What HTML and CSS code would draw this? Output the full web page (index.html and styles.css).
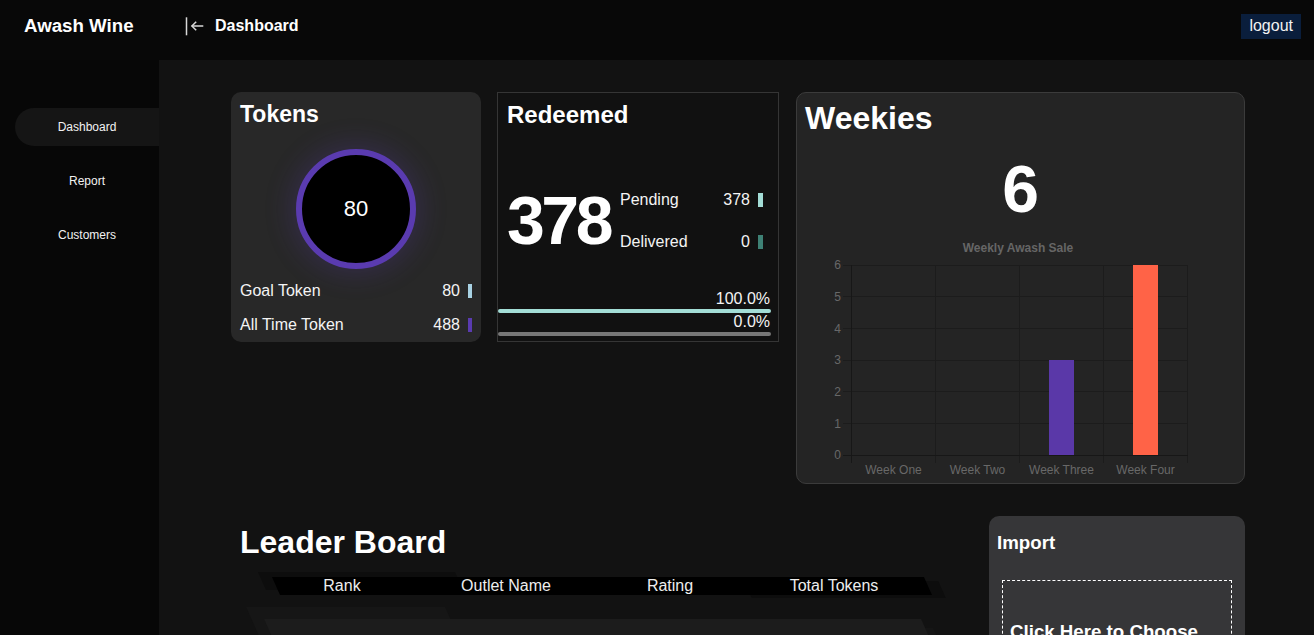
FILE: index.html
```html
<!DOCTYPE html>
<html lang="en">
<head>
<meta charset="utf-8">
<title>Awash Wine - Dashboard</title>
<link rel="stylesheet" href="styles.css">
</head>
<body>
<header class="topbar">
  <div class="brand">Awash Wine</div>
  <div class="crumb">
    <svg class="crumb-icon" width="22" height="22" viewBox="0 0 22 22" aria-hidden="true">
      <line x1="1.5" y1="2.3" x2="1.5" y2="20.3"/>
      <line x1="6.7" y1="11" x2="18.3" y2="11"/>
      <polyline points="11.2,6.8 6.9,11 11.2,15.2"/>
    </svg>
    <span>Dashboard</span>
  </div>
  <button class="logout">logout</button>
</header>
<div class="layout">
  <nav class="sidebar">
    <a class="nav-item active">Dashboard</a>
    <a class="nav-item">Report</a>
    <a class="nav-item">Customers</a>
  </nav>
  <main class="main">
    <section class="cards">
      <div class="card-tokens">
        <h2 class="tokens-title">Tokens</h2>
        <div class="ring">80</div>
        <div class="stat-row goal">
          <span class="stat-label">Goal Token</span>
          <span class="stat-value">80</span>
          <span class="stat-bar bar-blue"></span>
        </div>
        <div class="stat-row alltime">
          <span class="stat-label">All Time Token</span>
          <span class="stat-value">488</span>
          <span class="stat-bar bar-purple"></span>
        </div>
      </div>

      <div class="card-redeemed">
        <h2 class="redeemed-title">Redeemed</h2>
        <div class="redeemed-body">
          <div class="big">378</div>
          <div class="stats">
            <div class="stat-row">
              <span class="stat-label">Pending</span>
              <span class="stat-value">378</span>
              <span class="stat-bar wide bar-teal"></span>
            </div>
            <div class="stat-row">
              <span class="stat-label">Delivered</span>
              <span class="stat-value">0</span>
              <span class="stat-bar wide bar-darkteal"></span>
            </div>
          </div>
        </div>
        <div class="progress">
          <div class="pct">100.0%</div>
          <div class="pbar pbar-teal"></div>
          <div class="pct">0.0%</div>
          <div class="pbar pbar-grey"></div>
        </div>
      </div>

      <div class="card-weekies">
        <h2 class="weekies-title">Weekies</h2>
        <div class="weekies-num">6</div>
        <svg class="chart" width="447" height="240" viewBox="0 0 447 240">
          <text class="chart-title" x="221" y="15" text-anchor="middle">Weekly Awash Sale</text>
          <g class="grid">
            <line x1="46" y1="28" x2="390.5" y2="28"/>
            <line x1="46" y1="59.7" x2="390.5" y2="59.7"/>
            <line x1="46" y1="91.3" x2="390.5" y2="91.3"/>
            <line x1="46" y1="123" x2="390.5" y2="123"/>
            <line x1="46" y1="154.7" x2="390.5" y2="154.7"/>
            <line x1="46" y1="186.3" x2="390.5" y2="186.3"/>
            <line x1="138.5" y1="28" x2="138.5" y2="226"/>
            <line x1="222.5" y1="28" x2="222.5" y2="226"/>
            <line x1="306.5" y1="28" x2="306.5" y2="226"/>
            <line x1="390.5" y1="28" x2="390.5" y2="226"/>
          </g>
          <g class="axis">
            <line x1="46" y1="218" x2="390.5" y2="218"/>
            <line x1="54.5" y1="28" x2="54.5" y2="226"/>
          </g>
          <rect x="252" y="123" width="25" height="95" fill="#5a38a8"/>
          <rect x="336" y="28" width="25" height="190" fill="#ff6347"/>
          <g class="ylabels">
            <text x="44" y="32.3">6</text>
            <text x="44" y="64">5</text>
            <text x="44" y="95.6">4</text>
            <text x="44" y="127.3">3</text>
            <text x="44" y="159">2</text>
            <text x="44" y="190.6">1</text>
            <text x="44" y="222.3">0</text>
          </g>
          <g class="xlabels">
            <text x="96.5" y="237.3">Week One</text>
            <text x="180.5" y="237.3">Week Two</text>
            <text x="264.5" y="237.3">Week Three</text>
            <text x="348.5" y="237.3">Week Four</text>
          </g>
        </svg>
      </div>
    </section>

    <section class="lower">
      <div class="leader">
        <h2 class="leader-title">Leader Board</h2>
        <div class="lb-wrap lb-headwrap">
          <div class="lb-head">
            <span>Rank</span>
            <span>Outlet Name</span>
            <span>Rating</span>
            <span>Total Tokens</span>
          </div>
        </div>
        <div class="lb-wrap lb-rowwrap">
          <div class="lb-row"></div>
        </div>
      </div>
      <div class="import">
        <h3 class="import-title">Import</h3>
        <div class="dropzone">Click Here to Choose File</div>
      </div>
    </section>
  </main>
</div>
</body>
</html>
```

FILE: styles.css
```css
* {
  box-sizing: border-box;
}

html,
body {
  margin: 0;
  height: 100%;
}

body {
  background: #080808;
  color: #ffffff;
  font-family: "Liberation Sans", Arial, sans-serif;
  overflow: hidden;
}

/* ---------- top bar ---------- */
.topbar {
  height: 60px;
  display: flex;
  align-items: center;
  padding-bottom: 8px;
  background: #080808;
}

.brand {
  width: 185px;
  flex: none;
  padding-left: 24px;
  font-size: 18.7px;
  font-weight: 700;
  line-height: 22px;
}

.crumb {
  display: flex;
  align-items: center;
  gap: 8px;
  font-size: 16px;
  font-weight: 700;
  line-height: 20px;
}

.crumb-icon {
  display: block;
  fill: none;
  stroke: #d8d8d8;
  stroke-width: 1.5;
}

.logout {
  margin-left: auto;
  margin-right: 13px;
  height: 25px;
  padding: 0 8px;
  border: 0;
  background: #0a1e3c;
  color: #f2f2f2;
  font: 16px "Liberation Sans", Arial, sans-serif;
}

/* ---------- layout ---------- */
.layout {
  display: flex;
  height: calc(100% - 60px);
}

.sidebar {
  width: 159px;
  flex: none;
  background: #070707;
  padding-top: 48px;
  display: flex;
  flex-direction: column;
  gap: 16px;
}

.nav-item {
  margin-left: 15px;
  height: 38px;
  line-height: 38px;
  text-align: center;
  font-size: 12px;
  color: #f2f2f2;
  border-radius: 19px 0 0 19px;
}

.nav-item.active {
  background: #151515;
}

.main {
  flex: 1;
  background: #121212;
  padding: 32px 69px 0 72px;
}

/* ---------- cards row ---------- */
.cards {
  display: flex;
  align-items: flex-start;
}

h2,
h3 {
  margin: 0;
  font-weight: 700;
}

.stat-row {
  display: flex;
  align-items: center;
  font-size: 16px;
  line-height: 20px;
  color: #f4f4f4;
}

.stat-label {
  flex: 1;
}

.stat-bar {
  width: 4px;
  height: 14px;
  margin-left: 8px;
}

.stat-bar.wide {
  width: 5px;
}

.bar-blue { background: #a8d2e4; }
.bar-purple { background: #5a3bb0; }
.bar-teal { background: #a3ddd6; }
.bar-darkteal { background: #3e8175; }

/* tokens */
.card-tokens {
  width: 250px;
  height: 250px;
  flex: none;
  background: #282828;
  border-radius: 10px;
  padding: 9px 9px 0;
}

.tokens-title {
  font-size: 23px;
  line-height: 26px;
}

.ring {
  width: 120px;
  height: 120px;
  margin: 22px auto 0;
  border-radius: 50%;
  border: 6px solid #5a3bb0;
  background: #000000;
  display: flex;
  align-items: center;
  justify-content: center;
  font-size: 22px;
  box-shadow: 0 0 26px 6px rgba(90, 59, 176, 0.22);
}

.goal {
  margin-top: 12px;
}

.alltime {
  margin-top: 14px;
}

/* redeemed */
.card-redeemed {
  width: 282px;
  height: 250px;
  flex: none;
  margin-left: 16px;
  background: #111111;
  border: 1px solid #353535;
  display: flex;
  flex-direction: column;
}

.redeemed-title {
  font-size: 24px;
  line-height: 28px;
  margin: 8px 0 0 9px;
}

.redeemed-body {
  display: flex;
  align-items: flex-start;
  margin-top: 56px;
  padding-left: 9px;
}

.big {
  width: 113px;
  flex: none;
  font-size: 68px;
  line-height: 70px;
  font-weight: 700;
  letter-spacing: -3.5px;
}

.stats {
  width: 143px;
  margin-top: 5px;
  display: flex;
  flex-direction: column;
  gap: 22px;
}

.progress {
  margin-top: auto;
  padding: 0 7px 5px 0;
}

.pct {
  text-align: right;
  font-size: 16px;
  line-height: 18px;
  padding-right: 1px;
  color: #f4f4f4;
}

.pbar {
  height: 4px;
  margin-top: 1px;
  border-radius: 2px;
}

.pbar-teal { background: #a3ddd6; }
.pbar-grey { background: #777777; }

/* weekies */
.card-weekies {
  width: 449px;
  height: 392px;
  flex: none;
  margin-left: 17px;
  background: #242424;
  border: 1px solid #3b3b3b;
  border-radius: 10px;
}

.weekies-title {
  font-size: 32px;
  line-height: 37px;
  margin: 7px 0 0 8px;
}

.weekies-num {
  margin-top: 17px;
  font-size: 66px;
  line-height: 70px;
  font-weight: 700;
  text-align: center;
}

.chart {
  display: block;
  margin-top: 13px;
  font-family: "Liberation Sans", Arial, sans-serif;
}

.chart-title {
  font-size: 12px;
  font-weight: 700;
  fill: #666666;
}

.grid line {
  stroke: #1c1c1c;
  stroke-width: 1;
  shape-rendering: crispEdges;
}

.axis line {
  stroke: #171717;
  stroke-width: 1;
  shape-rendering: crispEdges;
}

.ylabels text {
  font-size: 12px;
  fill: #686868;
  text-anchor: end;
}

.xlabels text {
  font-size: 12px;
  fill: #686868;
  text-anchor: middle;
}

/* ---------- lower ---------- */
.lower {
  display: flex;
  align-items: flex-start;
  gap: 29px;
  margin-top: 32px;
}

.leader {
  flex: 1;
}

.leader-title {
  font-size: 32px;
  line-height: 37px;
  margin: 8px 0 0 9px;
}

.lb-wrap {
  position: relative;
  width: 656px;
  margin-left: 29px;
}

.lb-wrap::before,
.lb-wrap::after {
  content: "";
  position: absolute;
  transform: skewX(24deg);
}

.lb-headwrap {
  margin-top: 16px;
  height: 18px;
}

.lb-headwrap::before {
  top: -5px;
  left: 2px;
  width: 197px;
  height: 18px;
  background: #0d0d0d;
}

.lb-headwrap::after {
  top: 4px;
  left: 488px;
  width: 194px;
  height: 17px;
  background: #0d0d0d;
}

.lb-head {
  position: relative;
  z-index: 1;
  height: 18px;
  display: grid;
  grid-template-columns: repeat(4, 1fr);
  font-size: 16px;
  line-height: 18px;
  color: #eeeeee;
  text-align: center;
}

.lb-head::before {
  content: "";
  position: absolute;
  z-index: -1;
  top: 0;
  bottom: 0;
  left: 16px;
  right: -12px;
  background: #000000;
  transform: skewX(24deg);
}

.lb-rowwrap {
  margin-top: 24px;
  height: 40px;
}

.lb-rowwrap::before {
  top: -12px;
  left: -5px;
  width: 199px;
  height: 40px;
  background: #161616;
}

.lb-rowwrap::after {
  top: 9px;
  right: -26px;
  width: 199px;
  height: 40px;
  background: #151515;
}

.lb-row {
  position: relative;
  z-index: 1;
  height: 40px;
}

.lb-row::before {
  content: "";
  position: absolute;
  z-index: -1;
  top: 0;
  bottom: 0;
  left: 13px;
  right: -14px;
  background: #1c1c1c;
  transform: skewX(24deg);
}

/* import */
.import {
  width: 256px;
  height: 220px;
  flex: none;
  background: #363638;
  border-radius: 10px;
  padding: 16px 13px 0 8px;
}

.import-title {
  font-size: 18.7px;
  line-height: 22px;
}

.dropzone {
  margin: 26px 0 0 5px;
  height: 150px;
  border: 1px dashed #ffffff;
  padding: 40px 7px 0;
  font-size: 18.7px;
  line-height: 22px;
  font-weight: 700;
}
```
